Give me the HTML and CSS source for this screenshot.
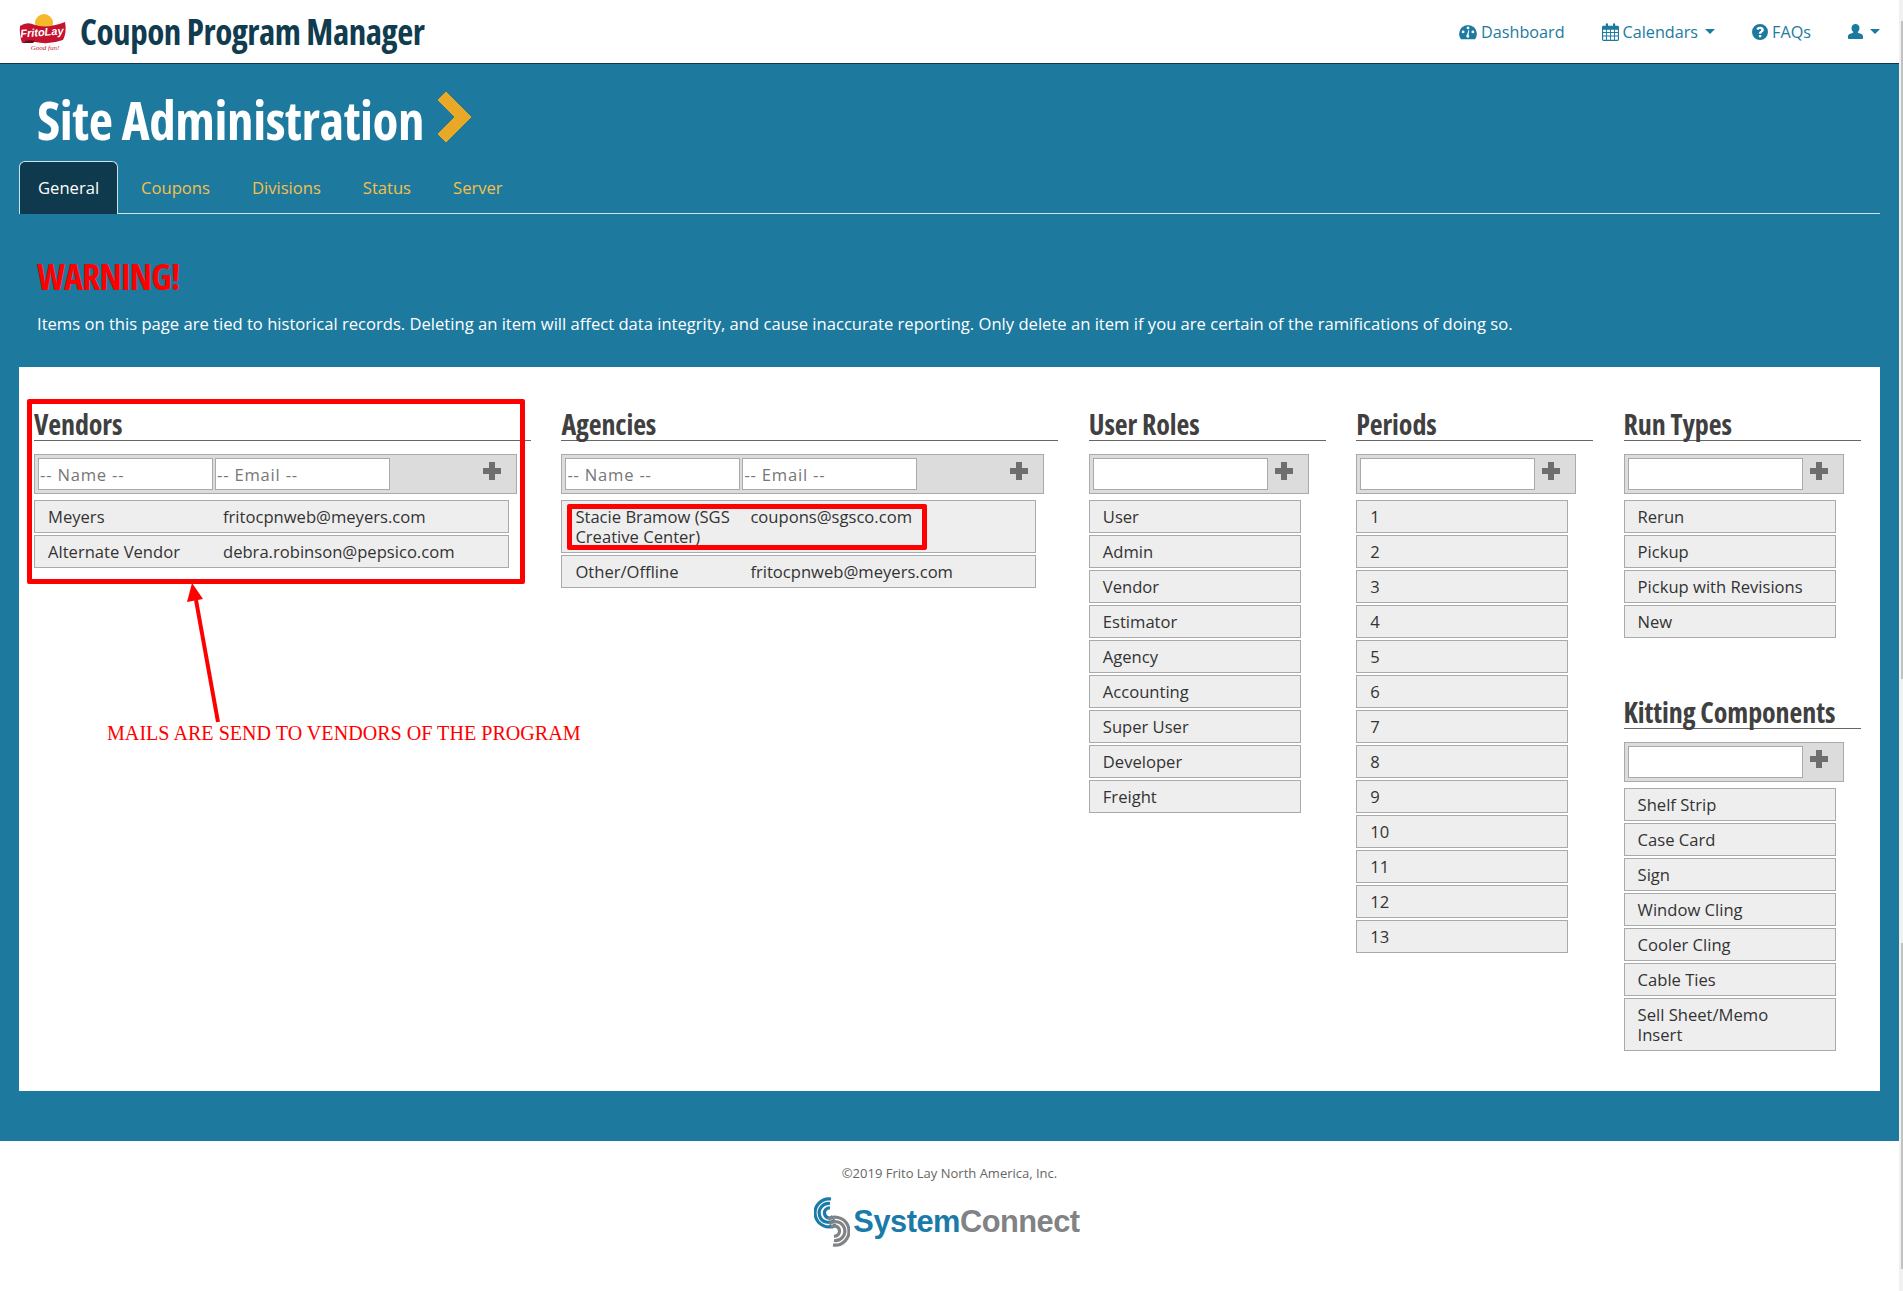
FILE: index.html
```html
<!DOCTYPE html>
<html>

<head>
    <title>Coupon Program Manager</title>
    <link rel="stylesheet" href="styles.css">
</head>

<body>
    <header class="topbar">
        <div class="brand">
            <svg class="brand-logo" viewBox="0 0 48 40" width="48" height="40">
                <circle cx="25" cy="11" r="9" fill="#f7b92c"/>
                <path d="M1 14 Q8 9 16 13 Q28 17 46 10 Q48 20 44 28 Q30 33 16 30 Q6 28 3 31 Q0 22 1 14Z" fill="#c4122f"/>
                <path d="M3 31 Q8 27 16 29 L14 31 Q8 31 3 31Z" fill="#6b0a1a"/>
                <text x="23" y="24" class="logo-name" text-anchor="middle" transform="rotate(-4 23 22)">FritoLay</text>
                <text x="26" y="38" class="logo-tag" text-anchor="middle">Good fun!</text>
            </svg>
            <span class="brand-name">Coupon Program Manager</span>
        </div>
        <nav class="topnav">
            <a href="#">
                <svg class="icon" viewBox="0 0 20 18" width="18" height="16"><path fill-rule="evenodd" d="M10 1a10 10 0 0 0-10 10c0 2.400.8 4.500 2.200 6.200h15.600A10 10 0 0 0 20 11 10 10 0 0 0 10 1zM4.500 10.500a1.600 1.600 0 1 1 0-3.200 1.600 1.600 0 0 1 0 3.200zM10 6a1.600 1.600 0 1 1 0-3.200A1.600 1.600 0 0 1 10 6zm5.500 4.500a1.600 1.600 0 1 1 0-3.200 1.600 1.600 0 0 1 0 3.200zM10 15.500a2 2 0 0 1-1-3.700l1.500-5 .9.2-.8 5a2 2 0 0 1-.6 3.500z"/></svg>
                Dashboard</a>
            <a href="#">
                <svg class="icon" viewBox="0 0 18 19" width="17" height="18"><path fill-rule="evenodd" d="M1.500 3H4V1.500a1.200 1.200 0 0 1 2.400 0V3h5.200V1.500a1.200 1.200 0 0 1 2.400 0V3h2.500A1.500 1.500 0 0 1 18 4.500v13a1.500 1.500 0 0 1-1.500 1.500h-15A1.500 1.500 0 0 1 0 17.500v-13A1.500 1.500 0 0 1 1.500 3zM1.200 7v2.500h3V7zm4 0v2.500h3.300V7zm4.300 0v2.500h3.300V7zm4.300 0v2.500h3V7zM1.200 10.500v2.800h3v-2.800zm4 0v2.800h3.300v-2.800zm4.300 0v2.800h3.300v-2.800zm4.300 0v2.800h3v-2.800zM1.200 14.300v3.500h3v-3.500zm4 0v3.500h3.300v-3.500zm4.300 0v3.500h3.300v-3.500zm4.300 0v3.500h3v-3.500z"/></svg>
                Calendars <span class="caret"></span></a>
            <a href="#">
                <svg class="icon" viewBox="0 0 16 16" width="16" height="16"><path fill-rule="evenodd" d="M8 0a8 8 0 1 0 0 16A8 8 0 0 0 8 0zm1.300 13.300H6.900v-2.300h2.400zm2-5.800c-.4.500-.8.800-1.300 1.100-.5.300-.7.500-.7 1.200H6.900c0-1.600.5-2.100 1.300-2.600.6-.4 1-.7 1-1.300 0-.6-.5-1-1.200-1-.8 0-1.300.4-1.700 1.200L4.400 4.900C5.100 3.500 6.300 2.700 8.100 2.700c2 0 3.700 1.100 3.700 3 0 .7-.2 1.300-.5 1.800z"/></svg>
                FAQs</a>
            <a href="#">
                <svg class="icon" viewBox="0 0 15 16" width="15" height="16"><path d="M7.500 0a4 4 0 0 1 4 4.200c0 1.500-.8 3-1.800 3.700 0 .5.200.8.800 1 1.800.6 4.500 1 4.500 3.700v1.600c0 .5-.5.800-1 .8H1c-.5 0-1-.3-1-.8v-1.600c0-2.700 2.700-3.100 4.500-3.700.6-.2.800-.5.800-1-1-.7-1.800-2.200-1.800-3.700a4 4 0 0 1 4-4.200z"/></svg>
                <span class="caret"></span></a>
        </nav>
    </header>

    <main class="content">
        <h1 class="page-title">Site Administration
            <svg class="chevron" viewBox="0 0 34 50" width="34" height="50"><path d="M8 0 L33 25 L8 50 L0 42 L17 25 L0 8Z" fill="#e9a825" stroke="#e9a825" stroke-width="1" stroke-linejoin="round"/></svg>
        </h1>

        <ul class="tabs">
            <li class="active"><a href="#">General</a></li>
            <li><a href="#">Coupons</a></li>
            <li><a href="#">Divisions</a></li>
            <li><a href="#">Status</a></li>
            <li><a href="#">Server</a></li>
        </ul>

        <div class="warning">
            <h2>WARNING!</h2>
            <p>Items on this page are tied to historical records. Deleting an item will affect data integrity, and cause inaccurate reporting. Only delete an item if you are certain of the ramifications of doing so.</p>
        </div>

        <div class="panel">
            <section class="col wide">
                <h3>Vendors</h3>
                <div class="add-row">
                    <input type="text" placeholder="-- Name --">
                    <input type="text" placeholder="-- Email --">
                    <span class="plus"></span>
                </div>
                <div class="item"><span>Meyers</span><span>fritocpnweb@meyers.com</span></div>
                <div class="item"><span>Alternate Vendor</span><span>debra.robinson@pepsico.com</span></div>
            </section>

            <section class="col wide">
                <h3>Agencies</h3>
                <div class="add-row">
                    <input type="text" placeholder="-- Name --">
                    <input type="text" placeholder="-- Email --">
                    <span class="plus"></span>
                </div>
                <div class="item"><span>Stacie Bramow (SGS Creative Center)</span><span>coupons@sgsco.com</span></div>
                <div class="item"><span>Other/Offline</span><span>fritocpnweb@meyers.com</span></div>
            </section>

            <section class="col">
                <h3>User Roles</h3>
                <div class="add-row"><input type="text"><span class="plus"></span></div>
                <div class="item">User</div>
                <div class="item">Admin</div>
                <div class="item">Vendor</div>
                <div class="item">Estimator</div>
                <div class="item">Agency</div>
                <div class="item">Accounting</div>
                <div class="item">Super User</div>
                <div class="item">Developer</div>
                <div class="item">Freight</div>
            </section>

            <section class="col">
                <h3>Periods</h3>
                <div class="add-row"><input type="text"><span class="plus"></span></div>
                <div class="item">1</div>
                <div class="item">2</div>
                <div class="item">3</div>
                <div class="item">4</div>
                <div class="item">5</div>
                <div class="item">6</div>
                <div class="item">7</div>
                <div class="item">8</div>
                <div class="item">9</div>
                <div class="item">10</div>
                <div class="item">11</div>
                <div class="item">12</div>
                <div class="item">13</div>
            </section>

            <section class="col">
                <h3>Run Types</h3>
                <div class="add-row"><input type="text"><span class="plus"></span></div>
                <div class="item">Rerun</div>
                <div class="item">Pickup</div>
                <div class="item">Pickup with Revisions</div>
                <div class="item">New</div>

                <h3 class="second">Kitting Components</h3>
                <div class="add-row"><input type="text"><span class="plus"></span></div>
                <div class="item">Shelf Strip</div>
                <div class="item">Case Card</div>
                <div class="item">Sign</div>
                <div class="item">Window Cling</div>
                <div class="item">Cooler Cling</div>
                <div class="item">Cable Ties</div>
                <div class="item">Sell Sheet/Memo Insert</div>
            </section>
        </div>
    </main>

    <footer class="footer">
        <p>&copy;2019 Frito Lay North America, Inc.</p>
        <div class="sc-logo">
            <svg viewBox="0 0 36 50" width="36" height="50" fill="none" stroke-width="3.200">
                <g stroke="#1b7ba8">
                    <path d="M17 2 A14 14 0 1 0 22 28"/>
                    <path d="M16 6.500 A9.500 9.500 0 1 0 21 23"/>
                    <path d="M16 11 A5 5 0 1 0 19 19.500"/>
                </g>
                <g stroke="#808285">
                    <path d="M19 48 A14 14 0 1 0 14 22"/>
                    <path d="M20 43.500 A9.500 9.500 0 1 0 15 27"/>
                    <path d="M20 39 A5 5 0 1 0 17 30.500"/>
                </g>
            </svg>
            <span class="sc-text"><span class="sc-blue">System</span>Connect</span>
        </div>
    </footer>

    <!-- notes drawn over the screenshot -->
    <div class="note-box vendors-box"></div>
    <div class="note-box agency-box"></div>
    <svg class="note-arrow" viewBox="0 0 40 150" width="40" height="150">
        <path d="M34 142 L12 20" stroke="#f00" stroke-width="4" fill="none"/>
        <path d="M8 3 L3 22 L19 19Z" fill="#f00"/>
    </svg>
    <div class="note-text">MAILS ARE SEND TO VENDORS OF THE PROGRAM</div>
    <div class="scroll-strip"></div>
</body>

</html>
```
FILE: styles.css
```css
* {
    box-sizing: border-box;
}

html,
body {
    margin: 0;
    padding: 0;
}

body {
    width: 1899px;
    height: 1291px;
    overflow: hidden;
    font-family: "Open Sans", sans-serif;
    font-size: 16.6px;
    line-height: 20px;
    color: #333;
    background-color: #fff;
}

a {
    text-decoration: none;
}

/* condensed headings */
.brand-name,
.page-title,
.warning h2,
.col h3 {
    font-family: "Open Sans", sans-serif;
    font-stretch: 75%;
    font-weight: bold;
}

/* top bar */
.topbar {
    height: 64px;
    display: flex;
    justify-content: space-between;
    align-items: center;
    padding: 0 19px 0 19px;
    background-color: #fff;
    border-bottom: 1px solid #0f3a4d;
}

.brand {
    display: flex;
    align-items: center;
    gap: 13px;
}

.logo-name {
    font-family: "Liberation Sans", sans-serif;
    font-weight: bold;
    font-style: italic;
    font-size: 11px;
    fill: #fff;
}

.logo-tag {
    font-family: "Liberation Serif", serif;
    font-style: italic;
    font-size: 7px;
    fill: #c4122f;
}

.brand-name {
    font-size: 35px;
    letter-spacing: -.45px;
    color: #113c4f;
}

.topnav {
    display: flex;
    align-items: center;
    gap: 37px;
    font-size: 16.2px;
}

.topnav a {
    display: flex;
    align-items: center;
    gap: 4px;
    color: #1c7aa0;
}

.icon {
    fill: #1c7aa0;
}

.caret {
    width: 0;
    height: 0;
    margin-left: 3px;
    border-top: 5px solid #1c7aa0;
    border-left: 5px solid transparent;
    border-right: 5px solid transparent;
}

/* teal area */
.content {
    height: 1077px;
    padding: 0 19px;
    background-color: #1d7a9e;
}

.page-title {
    display: flex;
    align-items: center;
    gap: 14px;
    height: 97px;
    margin: 0;
    padding: 14px 0 0 18px;
    font-size: 53px;
    letter-spacing: -.4px;
    color: #fff;
}

.chevron {
    margin-top: -6px;
}

.tabs {
    display: flex;
    height: 53px;
    margin: 0;
    padding: 0;
    list-style: none;
    border-bottom: 1px solid #cfe3ec;
}

.tabs li {
    height: 53px;
}

.tabs .active {
    margin-right: 2px;
}

.tabs a {
    display: block;
    height: 53px;
    padding: 17px 21px;
    color: #f4c04a;
}

.tabs .active a {
    padding: 16px 18px;
    color: #fff;
    background-color: #0f3a4d;
    border: 1px solid #cfe3ec;
    border-bottom: none;
    border-radius: 6px 6px 0 0;
}

.warning {
    height: 153px;
    padding: 45px 18px 0;
    color: #fff;
}

.warning h2 {
    margin: 0 0 19px;
    font-size: 36px;
    letter-spacing: -.9px;
    line-height: 36px;
    color: #f00;
}

.warning p {
    margin: 0;
}

/* white panel with the lists */
.panel {
    height: 724px;
    display: grid;
    grid-template-columns: 497px 497px 237px 237px 237px;
    column-gap: 30.4px;
    align-items: start;
    padding: 36px 0 0 15px;
    background-color: #fff;
}

.col h3 {
    height: 38px;
    margin: 0 0 13px;
    font-size: 28px;
    letter-spacing: -.1px;
    line-height: 42px;
    color: #404040;
    border-bottom: 1px solid #666;
}

.col h3.second {
    margin-top: 53px;
}

.add-row {
    display: flex;
    align-items: center;
    height: 40px;
    width: 220px;
    margin-bottom: 6px;
    padding: 0 0 0 3px;
    background-color: #dcdcdc;
    border: 1px solid #aaa;
}

.wide .add-row {
    width: 483px;
}

.add-row input {
    width: 175px;
    height: 32px;
    margin-right: 2px;
    padding: 0 1px;
    font-family: inherit;
    font-size: 16.6px;
    background-color: #fff;
    border: 1px solid #aaa;
    border-radius: 0;
    outline: none;
}

.add-row input::placeholder {
    letter-spacing: .8px;
    color: #777;
}

.plus {
    width: 18px;
    height: 18px;
    margin-left: auto;
    margin-right: 15px;
    margin-top: -6px;
    background:
        linear-gradient(#6e6e6e, #6e6e6e) center / 18px 6px no-repeat,
        linear-gradient(#6e6e6e, #6e6e6e) center / 6px 18px no-repeat;
}

.item {
    width: 212px;
    margin-bottom: 2px;
    padding: 6px 25px 5px 13px;
    background-color: #eee;
    border: 1px solid #aaa;
}

.wide .item {
    width: 475px;
    display: grid;
    grid-template-columns: 175px 1fr;
    padding-right: 13px;
}

.wide .item span:first-child {
    padding-right: 10px;
}

/* footer */
.footer {
    padding-top: 23px;
    text-align: center;
}

.footer p {
    margin: 0 0 15px;
    font-size: 13px;
    line-height: 18px;
    color: #666;
}

.sc-logo {
    display: flex;
    justify-content: center;
    align-items: center;
    gap: 3px;
    padding-right: 5px;
}

.sc-text {
    font-family: "Liberation Sans", sans-serif;
    font-weight: bold;
    font-size: 30.8px;
    letter-spacing: -.5px;
    color: #808285;
}

.sc-blue {
    color: #1b7ba8;
}

/* red notes lying over the page */
.note-box {
    position: absolute;
    border: 5px solid #f00;
    border-radius: 2px;
}

.vendors-box {
    left: 27px;
    top: 399px;
    width: 498px;
    height: 185px;
}

.agency-box {
    left: 567px;
    top: 504px;
    width: 360px;
    height: 46px;
}

.note-arrow {
    position: absolute;
    left: 184px;
    top: 580px;
}

.note-text {
    position: absolute;
    left: 107px;
    top: 723px;
    font-family: "Liberation Serif", serif;
    font-size: 20.1px;
    color: #f00;
    white-space: nowrap;
}

/* browser scrollbar at the right edge of the capture */
.scroll-strip {
    position: absolute;
    left: 1899px;
    top: 0;
    width: 4px;
    height: 1291px;
    background:
        linear-gradient(to bottom, transparent 21px, #c1c1c1 21px, #c1c1c1 679px, transparent 679px, transparent 943px, #c1c1c1 943px, #c1c1c1 1269px, transparent 1269px) right / 2px 100% no-repeat,
        #f1f1f1;
}
```
